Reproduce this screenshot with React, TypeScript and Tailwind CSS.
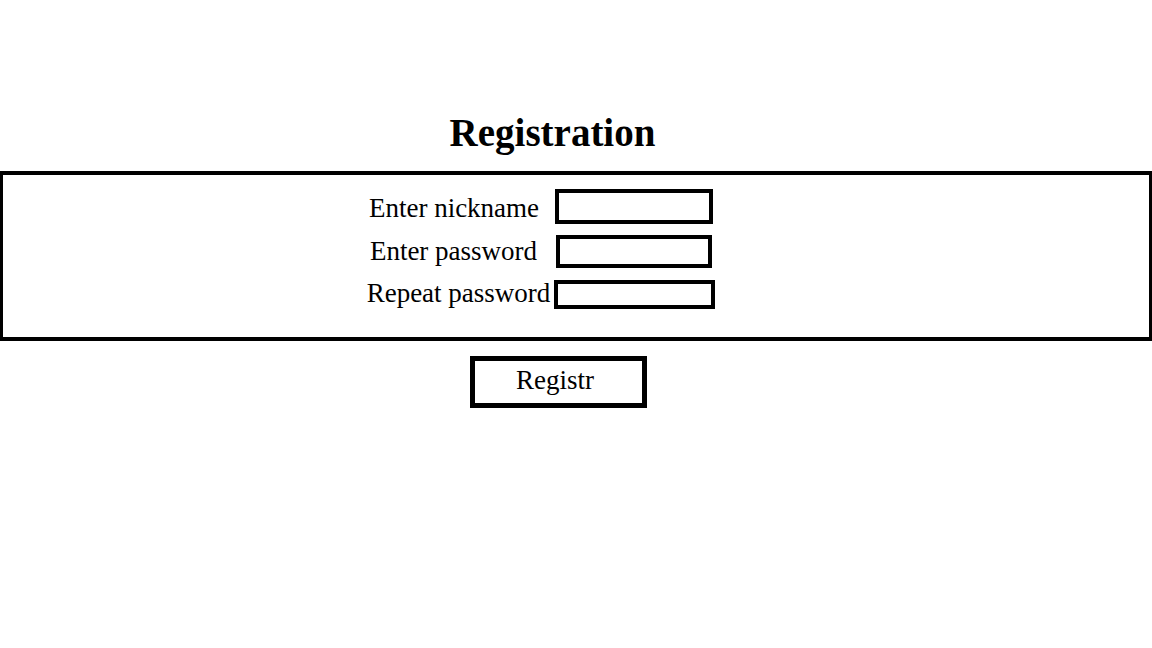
import React from 'react';

const serif = "font-['Liberation_Serif','Times_New_Roman',serif]";

export default function App() {
  return (
    <div className={`min-h-screen w-full bg-white text-black ${serif}`}>
      {/* Title */}
      <div className="flex justify-center pr-[47px] pt-[110px] pb-[15px]">
        <h1 className="text-[39px] font-bold leading-[46px]">Registration</h1>
      </div>

      {/* Form box */}
      <div className="border-y-4 border-x-[3px] border-black pt-[14px] pb-[28px] pr-[70px]">
        <div className="flex justify-center items-center h-[35px]">
          <span className="pt-[3px] whitespace-nowrap text-[27px] leading-[31px]">Enter nickname</span>
          <input type="text" className="ml-[16px] h-[35px] w-[158px] shrink-0 border-4 border-black bg-white outline-none" />
        </div>
        <div className="mt-[11px] flex justify-center items-center h-[33px]">
          <span className="whitespace-nowrap text-[27px] leading-[31px]">Enter password</span>
          <input type="password" className="ml-[19px] h-[33px] w-[156px] shrink-0 border-4 border-black bg-white outline-none" />
        </div>
        <div className="mt-[12px] flex justify-center items-start h-[29px]">
          <span className="-mt-[2px] whitespace-nowrap text-[27px] leading-[31px]">Repeat password</span>
          <input type="password" className="ml-[4px] h-[29px] w-[161px] shrink-0 border-4 border-black bg-white outline-none" />
        </div>
      </div>

      {/* Submit */}
      <div className="flex justify-center pr-[35px] pt-[15px]">
        <button className="h-[52px] w-[177px] border-[5px] border-black bg-white pb-[4px] pr-[7px] text-[27px] leading-[31px]">
          Registr
        </button>
      </div>
    </div>
  );
}
